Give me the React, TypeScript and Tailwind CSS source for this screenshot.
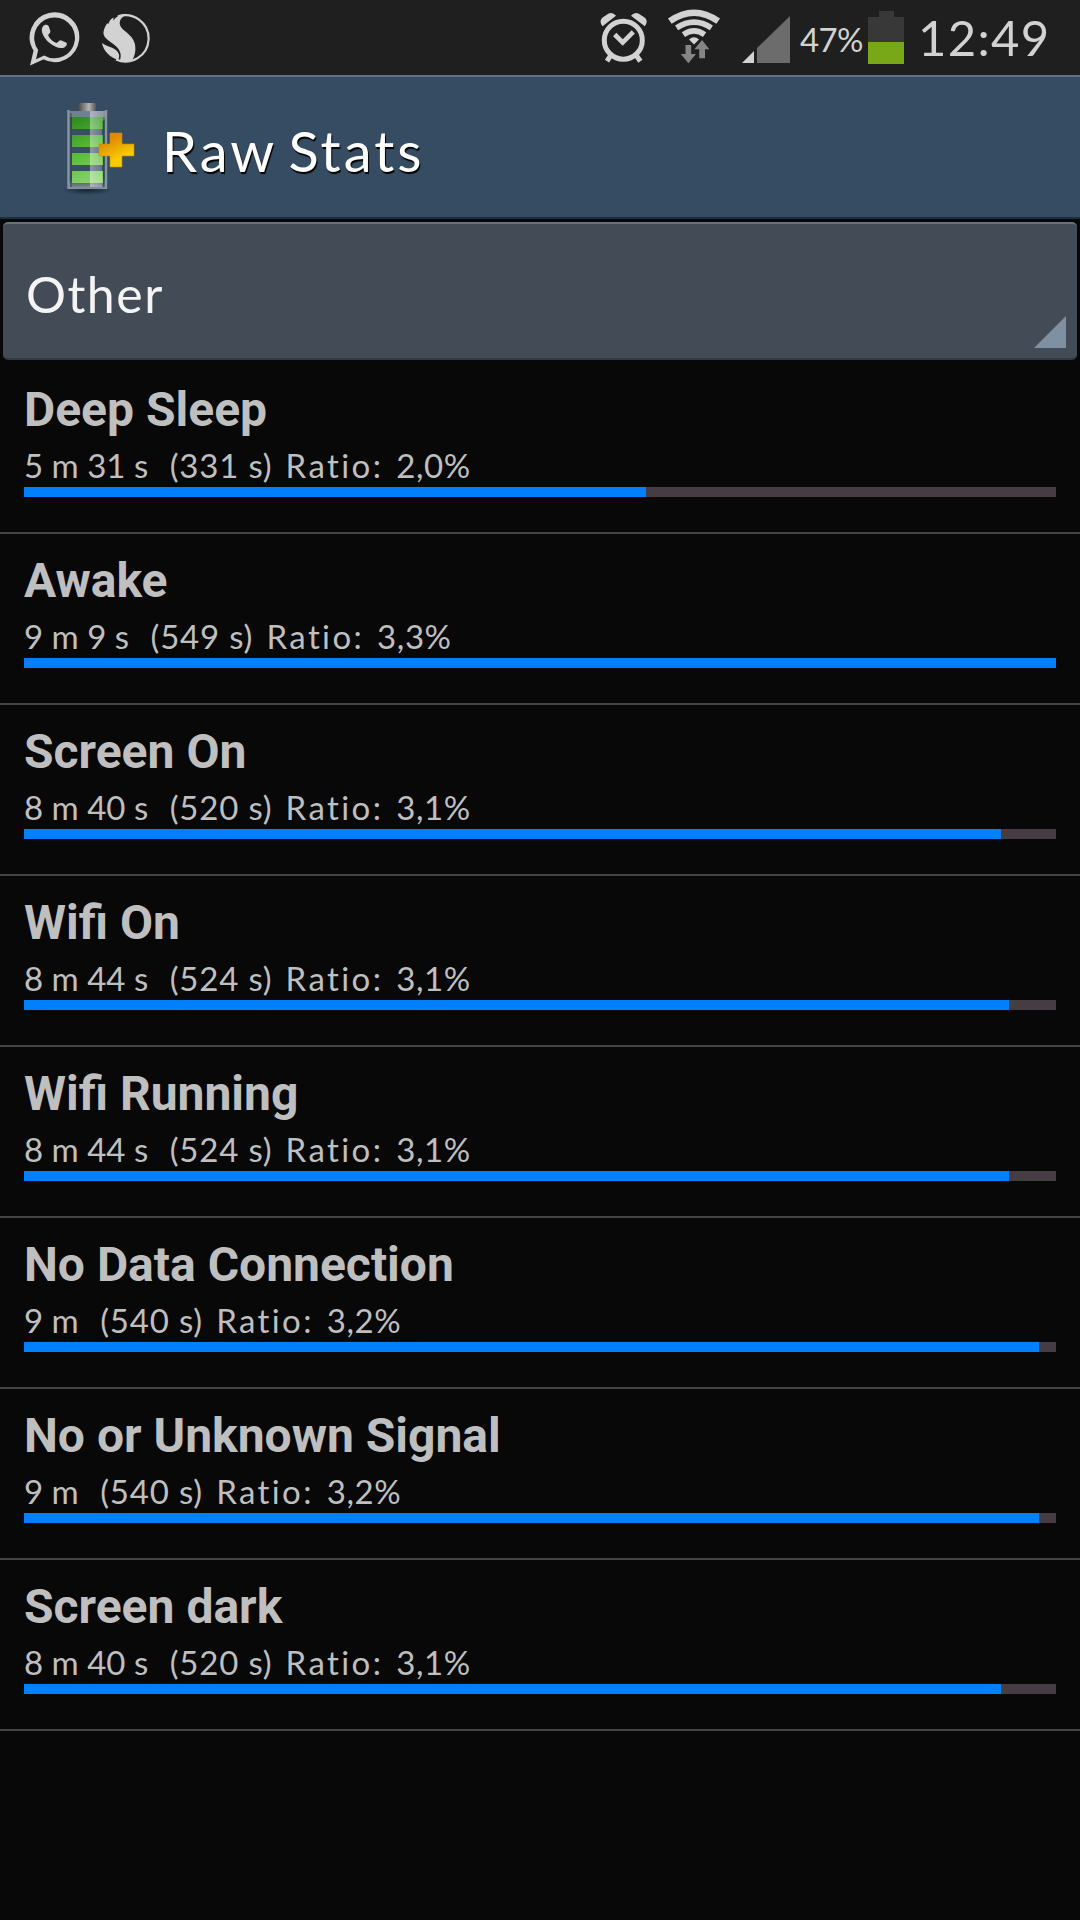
const total = 549;

const stats = [
  { name: "Deep Sleep", time: "5 m 31 s", seconds: 331, ratio: "2,0%" },
  { name: "Awake", time: "9 m 9 s", seconds: 549, ratio: "3,3%" },
  { name: "Screen On", time: "8 m 40 s", seconds: 520, ratio: "3,1%" },
  { name: "Wifi On", time: "8 m 44 s", seconds: 524, ratio: "3,1%" },
  { name: "Wifi Running", time: "8 m 44 s", seconds: 524, ratio: "3,1%" },
  { name: "No Data Connection", time: "9 m", seconds: 540, ratio: "3,2%" },
  { name: "No or Unknown Signal", time: "9 m", seconds: 540, ratio: "3,2%" },
  { name: "Screen dark", time: "8 m 40 s", seconds: 520, ratio: "3,1%" },
];

function WhatsAppIcon() {
  return (
    <svg className="h-[56px] w-[54px]" viewBox="27 10 54 56" fill="none">
      <path d="M31.2 64.2 L34.4 50.4 A24 24 0 1 1 43.5 58.6 Z" fill="#d2d2d2" stroke="#d2d2d2" strokeWidth="1.6" />
      <path d="M36 59.2 L38.2 50 A20.4 20.4 0 1 1 44.2 55.4 Z" fill="#1f1f1f" />
      <path
        d="M44.3 25.2 C46.6 24.2 48.2 24.8 49 27 L50.4 31.2 C50.8 32.8 48 34.2 48.2 35.4 C49.6 38.6 52.4 41.2 55.8 42.8 C57.6 43.6 58.8 39.6 60.8 40.2 L66 42.6 C67.8 43.6 66.6 46.4 64.4 47.4 C59.8 49.2 54.2 46.8 49.6 43 C45.4 39.4 42 34.6 41.8 30.2 C41.8 28 42.6 26 44.3 25.2 Z"
        fill="#d2d2d2"
      />
    </svg>
  );
}

function SwanIcon() {
  return (
    <svg className="h-[52px] w-[50px]" viewBox="101 12 50 52" fill="none">
      <path d="M118 16.4 A23.2 23.2 0 1 1 116 59.6" stroke="#d2d2d2" strokeWidth="2.2" />
      <path
        d="M126 13.8 C121.5 14.2 118 15.6 115.2 18.2 L113.6 20.4 L113.4 17.4 C110.6 18.8 109.2 21.2 108.4 24 L107.2 23.2 C104.4 27 103 31.4 103.6 34.6 C105.6 41.4 118 44.2 120.4 53 C121 56.2 120.6 59 119.6 60.8 C123.4 62.4 128.8 62 132 60.4 C135.4 55.4 136.2 49 134.6 43 C132.4 34.8 123 31.2 120.4 26 C118.6 21 121 17.2 126 15.2 Z"
        fill="#d2d2d2"
      />
      <path d="M102 43 C108 47.6 117.4 47.4 119 54.6 C119.4 57 119 58.6 118.2 59.8 C109.6 57.2 103.2 50.8 102 43 Z" fill="#d2d2d2" />
    </svg>
  );
}

function AlarmIcon() {
  return (
    <svg className="h-[52px] w-[48px]" viewBox="600 12 48 52" fill="none" stroke="#d2d2d2">
      <circle cx="623.3" cy="40.2" r="19" strokeWidth="5" />
      <path d="M614.7 34.5 L622.7 42.5 L633.3 31.8" strokeWidth="4.6" />
      <path d="M611 55 L607 61.2 M636 55 L640.4 61.2" strokeWidth="5" />
      <path
        d="M602.6 26.2 C599.8 23 600 19.6 602.6 17.4 L608.6 13.6 C611 12.2 613.2 12.8 616 15.8 Z M644.8 26.2 C647.4 23 647.2 19.6 644.6 17.4 L638.4 13.6 C636 12.2 634 12.8 631 15.8 Z"
        fill="#d2d2d2"
        stroke="none"
      />
    </svg>
  );
}

function WifiIcon() {
  return (
    <svg className="h-[56px] w-[54px]" viewBox="667 9 54 56" fill="none">
      <g stroke="#d2d2d2">
        <path d="M669.8 21.2 Q694 4.4 718.2 21.2" strokeWidth="6.4" />
        <path d="M676.6 27.8 Q694 16.4 711.4 27.8" strokeWidth="5.6" />
        <path d="M683.4 34.6 Q694 27 704.6 34.6" strokeWidth="5.6" />
      </g>
      <path d="M689 39.5 Q694 35 699 39.5 L694 44.4 Z" fill="#d2d2d2" />
      <path d="M685.5 45 H691.2 V54 H696 L688.4 63.2 L680.8 54 H685.5 Z M699.2 58.2 H705 V49.2 H709.4 L702 40 L694.4 49.2 H699.2 Z" fill="#858585" />
    </svg>
  );
}

function SignalIcon() {
  return (
    <svg className="h-[47px] w-[48px]" viewBox="742 16 48 47">
      <path d="M742 63 L754 51 V63 Z" fill="#d2d2d2" />
      <path d="M757 63 V48 L790 16 V63 Z" fill="#6c6c6c" />
    </svg>
  );
}

function StatusBattery() {
  return (
    <div className="flex w-[36px] flex-col items-center">
      <div className="h-[6px] w-[15px] bg-[#383838]" />
      <div className="h-[25px] w-full bg-[#383838]" />
      <div className="h-[22px] w-full bg-[#78a818]" />
    </div>
  );
}

function AppIcon() {
  return (
    <svg className="h-[96px] w-[80px] shrink-0" viewBox="58 100 80 96">
      <defs>
        <linearGradient id="cap" x1="0" x2="1">
          <stop offset="0" stopColor="#444" />
          <stop offset="0.2" stopColor="#6a6a6a" />
          <stop offset="0.6" stopColor="#b4b4b4" />
          <stop offset="1" stopColor="#555" />
        </linearGradient>
        <linearGradient id="green" gradientUnits="userSpaceOnUse" x1="72" y1="120" x2="98" y2="184">
          <stop offset="0" stopColor="#2f8c20" />
          <stop offset="0.45" stopColor="#55b936" />
          <stop offset="1" stopColor="#90d670" />
        </linearGradient>
        <linearGradient id="gold" x1="0.2" y1="0" x2="0.7" y2="1">
          <stop offset="0.2" stopColor="#e08c00" />
          <stop offset="0.75" stopColor="#f8cc00" />
        </linearGradient>
        <linearGradient id="base" x1="0" y1="0" x2="0" y2="1">
          <stop offset="0" stopColor="#7e8a94" stopOpacity="0.2" />
          <stop offset="1" stopColor="#8b969e" />
        </linearGradient>
        <linearGradient id="glare" x1="0" y1="0" x2="1" y2="0">
          <stop offset="0" stopColor="#fff" stopOpacity="0.42" />
          <stop offset="1" stopColor="#fff" stopOpacity="0.14" />
        </linearGradient>
        <radialGradient id="shade">
          <stop offset="0" stopColor="#152330" stopOpacity="0.9" />
          <stop offset="1" stopColor="#152330" stopOpacity="0" />
        </radialGradient>
      </defs>
      <ellipse cx="87" cy="190" rx="26" ry="5" fill="url(#shade)" />
      <rect x="68" y="111" width="39" height="77" fill="#394e61" />
      <rect x="70" y="111" width="36" height="6" fill="#72818e" />
      <rect x="69" y="180" width="37" height="9" fill="url(#base)" />
      <rect x="78" y="103" width="18" height="8" rx="1.5" fill="url(#cap)" />
      <path d="M72 117h31v12H72z M72 135h31v12H72z M72 153h31v12H72z M72 171h31v12H72z" fill="url(#green)" />
      <path d="M90 111 H106 V119 L102 121 V187 H90 Z" fill="url(#glare)" />
      <path d="M68.5 110 V189 M106 110 V189" stroke="#8996a1" strokeWidth="2.4" />
      <path d="M71 113 V187 M103.8 121 V187" stroke="#34424e" strokeWidth="1" />
      <path d="M110 133h12v11h12v12h-12v11h-12v-11h-11v-12h11z" fill="url(#gold)" stroke="#c98708" strokeWidth="0.6" />
    </svg>
  );
}

export default function App() {
  return (
    <div className="flex h-[1920px] w-[1080px] flex-col overflow-hidden bg-[#080808] font-['Lato',sans-serif]">
      <div className="flex h-[75px] shrink-0 items-start bg-[#1f1f1f] text-[#d2d2d2]">
        <div className="ml-[27px] mt-[10px]"><WhatsAppIcon /></div>
        <div className="ml-[20px] mt-[12px]"><SwanIcon /></div>
        <div className="ml-[449px] mt-[12px]"><AlarmIcon /></div>
        <div className="ml-[19px] mt-[9px]"><WifiIcon /></div>
        <div className="ml-[21px] mt-[16px]"><SignalIcon /></div>
        <div className="ml-[10px] mt-[19px] w-[68px] whitespace-nowrap text-[33px] leading-[40px] tracking-[-0.7px]">47%</div>
        <div className="mt-[11px]"><StatusBattery /></div>
        <div className="ml-[14px] mt-[7px] whitespace-nowrap text-[49px] leading-[60px] tracking-[1.3px]">12:49</div>
      </div>

      <div className="flex h-[144px] shrink-0 items-start border-t-2 border-b-2 border-t-[#5c7489] border-b-[#1c2f40] bg-[#354c62]">
        <div className="ml-[58px] mt-[23px]"><AppIcon /></div>
        <div className="ml-[24px] mt-[42px] whitespace-nowrap text-[56px] leading-[64px] tracking-[3px] [word-spacing:-5px] text-white [text-shadow:1px_2px_1px_#000]">Raw Stats</div>
      </div>

      <div className="mx-[3px] mt-[3px] flex h-[138px] shrink-0 items-center justify-between rounded-[5px] border-t-2 border-b-2 border-t-[#65717b] border-b-[#303b44] bg-[#434c56]">
        <div className="ml-[23px] mt-[5px] text-[50px] leading-[60px] tracking-[1.5px] text-[#f4f4f4]">Other</div>
        <svg className="mr-[11px] mb-[10px] h-[32px] w-[32px] self-end" viewBox="0 0 32 32">
          <path d="M0 32 L32 0 V32 Z" fill="#7f90a2" />
        </svg>
      </div>

      <div className="mt-[3px] flex flex-col">
        {stats.map((s) => (
          <div key={s.name} className="flex h-[171px] flex-col border-b-2 border-[#444] px-[24px] pt-[19px] text-[#bfbfbf]">
            <div className="h-[55px] whitespace-nowrap font-['Roboto',sans-serif] text-[48px] font-bold leading-[56px]">{s.name}</div>
            <div className="h-[50px] whitespace-pre text-[33px] leading-[56px]">
              {s.time}
              <span className="ml-[3px] tracking-[0.8px]">{`  (${s.seconds} s) `}</span>
              <span className="ml-[4px] tracking-[2.4px]">Ratio: </span>
              <span className="ml-[2px] tracking-[0.6px]">{s.ratio}</span>
            </div>
            <div className="h-[10px] bg-[#453d43]">
              <div className="h-full bg-[#0080ff]" style={{ width: `${(s.seconds / total) * 100}%` }} />
            </div>
          </div>
        ))}
      </div>
    </div>
  );
}
